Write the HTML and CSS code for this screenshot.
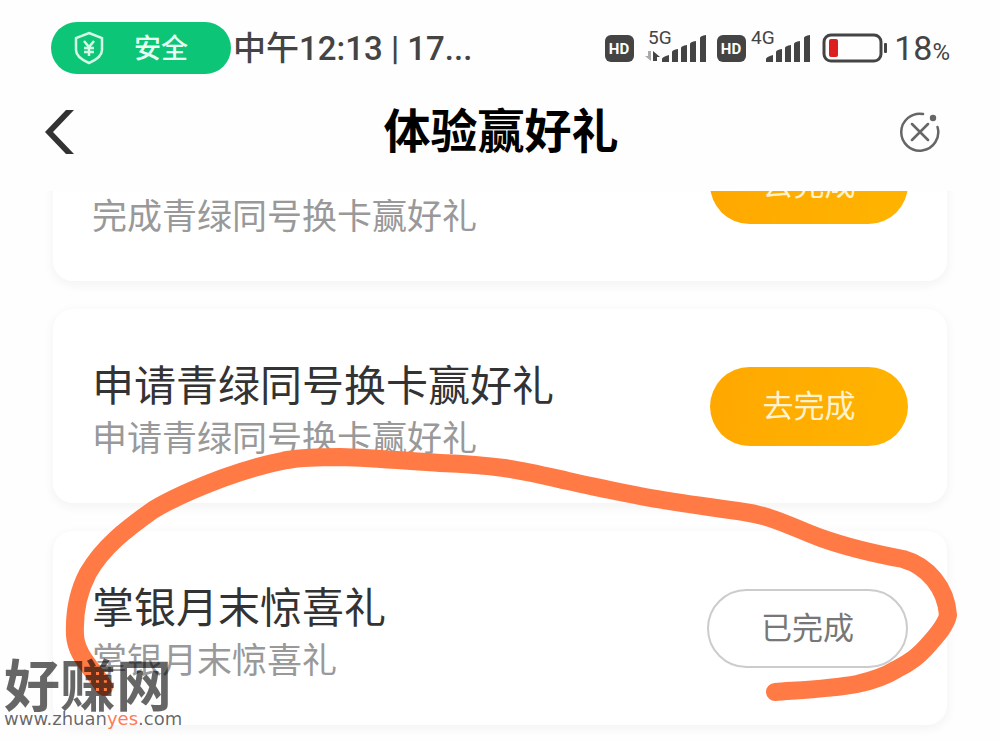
FILE: index.html
```html
<!DOCTYPE html>
<html lang="zh-CN">
<head>
<meta charset="utf-8">
<meta name="viewport" content="width=device-width, initial-scale=1">
<title>体验赢好礼</title>
<link rel="stylesheet" href="styles.css">
</head>
<body>
<div class="screen">
  <header class="top">
    <div class="status">
      <div class="safe">
        <svg class="shield" viewBox="0 0 30 34" aria-hidden="true">
          <path d="M15 2 28 7V19C28 25 22 29 15 32 8 29 2 25 2 19V7Z"/>
          <path d="M10 10 15 16 20 10M15 16V25M10 17H20M10 21H20"/>
        </svg>
        <span>安全</span>
      </div>
      <span class="clock">中午12:13 | 17...</span>
      <div class="signals">
        <svg class="signal-icons" viewBox="605 22 283 52" aria-hidden="true">
          <g fill="#444">
            <rect x="605" y="35" width="29" height="27" rx="6"/>
            <rect x="717" y="35" width="29" height="27" rx="6"/>
            <path id="bars" d="M662 62v-3q0-2 7-4v7zM672 62V52q0-2 6-3v13zM681 62V48q0-2 6-3v17zM690 62V44q0-2 6-3v21zM700 62V38q0-2 6-3v27z"/>
            <use href="#bars" x="104"/>
            <path d="M653 61V51L660 57H657V61Z"/>
            <rect x="884" y="43" width="3" height="10" rx="1"/>
          </g>
          <path d="M651 51V61L645 56H648V51Z" fill="#aaa"/>
          <g class="hd"><text x="619" y="54">HD</text><text x="731" y="54">HD</text></g>
          <g class="net"><text x="648" y="44">5G</text><text x="751" y="44">4G</text></g>
          <rect x="824" y="35" width="57" height="26" rx="7" fill="none" stroke="#444" stroke-width="3"/>
          <rect x="829" y="39" width="9" height="18" rx="2" fill="#dc1f1f"/>
        </svg>
        <span class="level">18<small>%</small></span>
      </div>
    </div>
    <nav class="nav">
      <button class="icon-btn start" aria-label="返回">
        <svg class="back" viewBox="0 0 30 44"><path d="M21 0H29L8 22 29 44H21L0 22Z"/></svg>
      </button>
      <h1>体验赢好礼</h1>
      <button class="icon-btn" aria-label="关闭">
        <svg class="close" viewBox="0 0 42 42"><path d="M24 3A18.500 18.500 0 1 0 38.500 16M13 13 29 29M29 13 13 29"/><circle cx="34" cy="7" r="3.200"/></svg>
      </button>
    </nav>
  </header>

  <main class="list">
    <article class="card">
      <div class="info"><p>完成青绿同号换卡赢好礼</p></div>
      <button class="action">去完成</button>
    </article>
    <article class="card">
      <div class="info"><h2>申请青绿同号换卡赢好礼</h2><p>申请青绿同号换卡赢好礼</p></div>
      <button class="action">去完成</button>
    </article>
    <article class="card">
      <div class="info"><h2>掌银月末惊喜礼</h2><p>掌银月末惊喜礼</p></div>
      <button class="action done">已完成</button>
    </article>
  </main>

  <svg class="marker" viewBox="0 0 1000 741" aria-hidden="true">
    <path d="M104 687C92 668 76 655 75 635C74 612 78 592 88 573C103 547 125 530 153 510C176 496 199 487 223 478C245 470 266 464 287 460C305 457 322 457 340 457C375 458 407 461 440 463C466 464 482 465 504 468C526 471 546 476 568 481C594 487 620 492 645 497C678 503 711 507 744 512C773 516 794 528 821 538C849 548 876 554 903 559C928 566 946 588 948 615C946 625 937 635 930 643C918 657 909 663 897 669C884 677 871 681 857 684C830 689 802 690 775 692"/>
  </svg>

  <div class="watermark">
    <strong>好赚网</strong>
    <span>www.zhuan<em>yes</em>.com</span>
  </div>
</div>
</body>
</html>
```
FILE: styles.css
```css
* { box-sizing: border-box; }

body {
  margin: 0;
  background: #fefefe;
  color: #333;
  font-family: Roboto, "Noto Sans CJK SC", sans-serif;
}

h1, h2, p { margin: 0; font-weight: 400; }

button {
  padding: 0;
  border: 0;
  background: none;
  font: inherit;
}

svg { display: block; }

.screen {
  position: relative;
  overflow: hidden;
}

.top {
  position: relative;
  z-index: 1;
  height: 191px;
  background: #fefefe;
}

.status {
  display: flex;
  align-items: center;
  height: 96px;
  padding: 0 50px 0 51px;
  color: #444;
}

.safe {
  display: flex;
  align-items: center;
  gap: 30px;
  width: 180px;
  height: 52px;
  padding-left: 23px;
  border-radius: 26px;
  background: #0cc577;
  color: #e9fff3;
  font-size: 27px;
  font-weight: 500;
}

.safe span { padding-bottom: 4px; }

.shield {
  width: 30px;
  height: 34px;
  fill: none;
  stroke: #d5fbe8;
  stroke-width: 2.5;
}

.clock {
  margin-left: 2px;
  padding-bottom: 4px;
  font-size: 33px;
  font-weight: 500;
  white-space: nowrap;
}

.signals {
  display: flex;
  align-items: center;
  gap: 6px;
  margin-left: auto;
}

.signal-icons { width: 283px; height: 52px; }

.hd {
  fill: #fff;
  font-size: 15px;
  font-weight: 700;
  text-anchor: middle;
}

.net { fill: #444; font-size: 19px; }

.level {
  padding-top: 4px;
  font-size: 34px;
  line-height: 40px;
}

.level small { font-size: 24px; }

.nav {
  display: flex;
  align-items: center;
  justify-content: space-between;
  height: 72px;
  padding: 0 59px 0 45px;
}

.nav h1 {
  color: #000;
  font-size: 47px;
  font-weight: 700;
  line-height: 72px;
}

.icon-btn { width: 42px; }
.icon-btn.start { width: 58px; }
.back { width: 30px; height: 44px; fill: #333; }

.close {
  width: 42px;
  height: 42px;
  fill: none;
  stroke: #666;
  stroke-width: 2.5;
  stroke-linecap: round;
}

.close circle { fill: #666; stroke: none; }

.list {
  display: flex;
  flex-direction: column;
  gap: 28px;
  margin-top: -104px;
  padding: 0 53px 16px;
}

.card {
  display: flex;
  align-items: center;
  justify-content: space-between;
  min-height: 194px;
  padding: 0 39px;
  border-radius: 20px;
  background: #fff;
  box-shadow: 0 3px 10px 2px rgba(0, 0, 0, 0.04);
}

.info {
  align-self: flex-end;
  padding: 50px 0 38px;
}

.info h2 { font-size: 42px; line-height: 56px; }

.info p {
  color: #999;
  font-size: 35px;
  line-height: 50px;
}

.action {
  width: 198px;
  height: 79px;
  padding-bottom: 6px;
  border-radius: 40px;
  background: linear-gradient(100deg, #ffa800, #ffb400);
  color: #fff3cf;
  font-size: 31px;
}

.action.done {
  width: 201px;
  border: 2px solid #ccc;
  background: #fff;
  color: #777;
}

.marker {
  position: absolute;
  z-index: 2;
  top: 0;
  left: 0;
  width: 100%;
  fill: none;
  stroke: #ff7a45;
  stroke-width: 18;
  stroke-linecap: round;
  stroke-linejoin: round;
  pointer-events: none;
}

.watermark {
  position: absolute;
  z-index: 3;
  bottom: 13px;
  left: 4px;
  display: flex;
  flex-direction: column;
  color: rgba(0, 0, 0, 0.6);
  font-family: "DejaVu Sans", "Noto Sans CJK SC", sans-serif;
}

.watermark strong {
  font-family: "Noto Sans CJK SC", sans-serif;
  font-size: 56px;
  font-weight: 700;
  line-height: 56px;
}

.watermark span { font-size: 18px; line-height: 18px; }
.watermark em { color: #ff7a55; font-style: normal; }
```
